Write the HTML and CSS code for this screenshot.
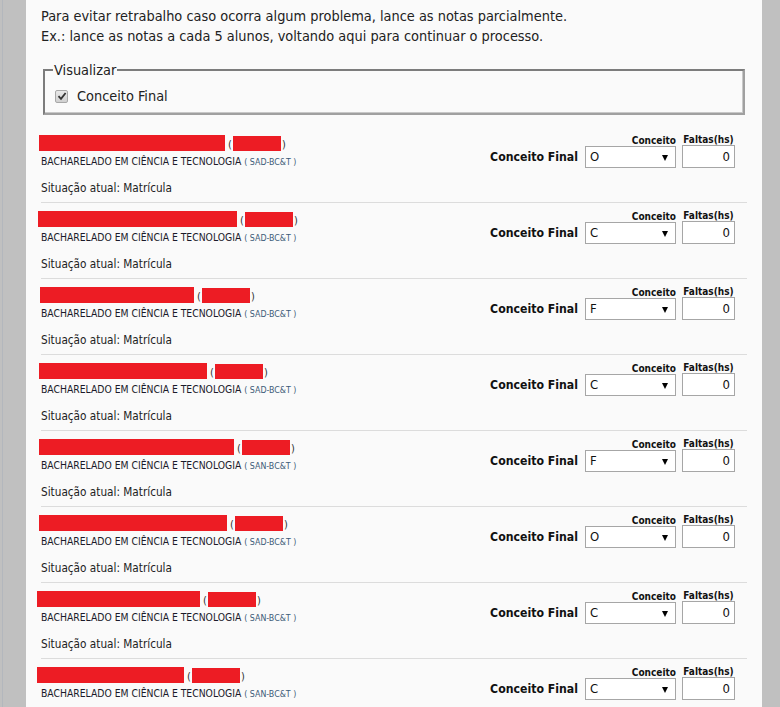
FILE: index.html
```html
<!DOCTYPE html>
<html lang="pt-BR">
<head>
<meta charset="utf-8">
<title>Lançamento de notas</title>
<link rel="stylesheet" href="styles.css">
</head>
<body>
<div class="frame">
  <div class="page">
    <p class="intro">Para evitar retrabalho caso ocorra algum problema, lance as notas parcialmente.<br>Ex.: lance as notas a cada 5 alunos, voltando aqui para continuar o processo.</p>

    <fieldset class="view">
      <legend>Visualizar</legend>
      <label class="check"><span class="box"><svg width="10" height="10" viewBox="0 0 10 10"><path d="M1.5 5.2 L4 7.8 L8.6 2" fill="none" stroke="#333" stroke-width="1.8"/></svg></span>Conceito Final</label>
    </fieldset>

    <div class="list">
      <div class="row">
        <div class="who">
          <div class="name"><span class="red" style="width:186px"></span> <span class="par">(<span class="red id" style="width:48px"></span>)</span></div>
          <div class="course">BACHARELADO EM CIÊNCIA E TECNOLOGIA <span class="code">( SAD-BC&amp;T )</span></div>
          <div class="sit">Situação atual: Matrícula</div>
        </div>
        <div class="grade">
          <span class="lbl">Conceito Final</span>
          <div class="col c1"><span class="hd">Conceito</span><span class="sel">O</span></div>
          <div class="col c2"><span class="hd">Faltas(hs)</span><span class="inp">0</span></div>
        </div>
      </div>
      <div class="row">
        <div class="who">
          <div class="name"><span class="red" style="width:199px;margin-left:-1px"></span> <span class="par">(<span class="red id" style="width:48px"></span>)</span></div>
          <div class="course">BACHARELADO EM CIÊNCIA E TECNOLOGIA <span class="code">( SAD-BC&amp;T )</span></div>
          <div class="sit">Situação atual: Matrícula</div>
        </div>
        <div class="grade">
          <span class="lbl">Conceito Final</span>
          <div class="col c1"><span class="hd">Conceito</span><span class="sel">C</span></div>
          <div class="col c2"><span class="hd">Faltas(hs)</span><span class="inp">0</span></div>
        </div>
      </div>
      <div class="row">
        <div class="who">
          <div class="name"><span class="red" style="width:154px;margin-left:1px"></span> <span class="par">(<span class="red id" style="width:48px"></span>)</span></div>
          <div class="course">BACHARELADO EM CIÊNCIA E TECNOLOGIA <span class="code">( SAD-BC&amp;T )</span></div>
          <div class="sit">Situação atual: Matrícula</div>
        </div>
        <div class="grade">
          <span class="lbl">Conceito Final</span>
          <div class="col c1"><span class="hd">Conceito</span><span class="sel">F</span></div>
          <div class="col c2"><span class="hd">Faltas(hs)</span><span class="inp">0</span></div>
        </div>
      </div>
      <div class="row">
        <div class="who">
          <div class="name"><span class="red" style="width:168px"></span> <span class="par">(<span class="red id" style="width:48px"></span>)</span></div>
          <div class="course">BACHARELADO EM CIÊNCIA E TECNOLOGIA <span class="code">( SAD-BC&amp;T )</span></div>
          <div class="sit">Situação atual: Matrícula</div>
        </div>
        <div class="grade">
          <span class="lbl">Conceito Final</span>
          <div class="col c1"><span class="hd">Conceito</span><span class="sel">C</span></div>
          <div class="col c2"><span class="hd">Faltas(hs)</span><span class="inp">0</span></div>
        </div>
      </div>
      <div class="row">
        <div class="who">
          <div class="name"><span class="red" style="width:195px"></span> <span class="par">(<span class="red id" style="width:48px"></span>)</span></div>
          <div class="course">BACHARELADO EM CIÊNCIA E TECNOLOGIA <span class="code">( SAN-BC&amp;T )</span></div>
          <div class="sit">Situação atual: Matrícula</div>
        </div>
        <div class="grade">
          <span class="lbl">Conceito Final</span>
          <div class="col c1"><span class="hd">Conceito</span><span class="sel">F</span></div>
          <div class="col c2"><span class="hd">Faltas(hs)</span><span class="inp">0</span></div>
        </div>
      </div>
      <div class="row">
        <div class="who">
          <div class="name"><span class="red" style="width:188px"></span> <span class="par">(<span class="red id" style="width:48px"></span>)</span></div>
          <div class="course">BACHARELADO EM CIÊNCIA E TECNOLOGIA <span class="code">( SAD-BC&amp;T )</span></div>
          <div class="sit">Situação atual: Matrícula</div>
        </div>
        <div class="grade">
          <span class="lbl">Conceito Final</span>
          <div class="col c1"><span class="hd">Conceito</span><span class="sel">O</span></div>
          <div class="col c2"><span class="hd">Faltas(hs)</span><span class="inp">0</span></div>
        </div>
      </div>
      <div class="row">
        <div class="who">
          <div class="name"><span class="red" style="width:163px;margin-left:-2px"></span> <span class="par">(<span class="red id" style="width:48px"></span>)</span></div>
          <div class="course">BACHARELADO EM CIÊNCIA E TECNOLOGIA <span class="code">( SAN-BC&amp;T )</span></div>
          <div class="sit">Situação atual: Matrícula</div>
        </div>
        <div class="grade">
          <span class="lbl">Conceito Final</span>
          <div class="col c1"><span class="hd">Conceito</span><span class="sel">C</span></div>
          <div class="col c2"><span class="hd">Faltas(hs)</span><span class="inp">0</span></div>
        </div>
      </div>
      <div class="row">
        <div class="who">
          <div class="name"><span class="red" style="width:147px;margin-left:-2px"></span> <span class="par">(<span class="red id" style="width:48px"></span>)</span></div>
          <div class="course">BACHARELADO EM CIÊNCIA E TECNOLOGIA <span class="code">( SAN-BC&amp;T )</span></div>
        </div>
        <div class="grade">
          <span class="lbl">Conceito Final</span>
          <div class="col c1"><span class="hd">Conceito</span><span class="sel">C</span></div>
          <div class="col c2"><span class="hd">Faltas(hs)</span><span class="inp">0</span></div>
        </div>
      </div>
    </div>
  </div>
</div>
</body>
</html>
```
FILE: styles.css
```css
html, body {
  margin: 0;
  padding: 0;
  height: 100%;
  overflow: hidden;
}
body {
  background: #c0c0c0;
  font-family: "DejaVu Sans Condensed", "DejaVu Sans", sans-serif;
  color: #222;
}
.frame {
  padding-left: 26px;
  box-shadow: inset 2px 0 0 #c0c0c0, inset 3px 0 0 #b3b7bd;
  height: 100%;
}
.page {
  width: 706px;
  min-height: 100%;
  background: #fafafa;
  padding: 0 15px;
}
.intro {
  margin: 0;
  padding-top: 6px;
  font-size: 14.4px;
  line-height: 20px;
  color: #222;
}
.view {
  margin: 17px 2px 0 2px;
  padding: 0 10px 6px 10px;
  border-color: #7c7c7c #a0a0a0 #a0a0a0 #7c7c7c;
  border-width: 2px;
  border-style: solid;
  box-shadow: inset -1px -1px 0 #c8c8c8;
  height: 42px;
}
.view legend {
  font-size: 14.4px;
  padding: 0 1px;
  margin-left: -2px;
  line-height: 14px;
}
.check {
  display: flex;
  align-items: center;
  gap: 9px;
  font-size: 14.4px;
  margin-top: 11px;
}
.box {
  width: 11px;
  height: 11px;
  border: 1px solid #a8a8a8;
  border-radius: 2px;
  background: linear-gradient(#e8e8e8, #d0d0d0);
  display: flex;
  align-items: center;
  justify-content: center;
}
.list {
  margin-top: 12px;
}
.row {
  display: grid;
  grid-template-columns: 1fr auto;
  height: 75px;
  border-bottom: 1px solid #dcdcdc;
}
.who {
  padding-top: 8px;
}
.name {
  height: 16px;
  display: flex;
  align-items: flex-end;
  margin-left: -2px;
  font-size: 11px;
  color: #333;
  white-space: nowrap;
}
.red {
  display: inline-block;
  height: 16px;
  background: #ed1c24;
  vertical-align: bottom;
}
.par {
  margin-left: 3px;
  display: inline-flex;
  align-items: flex-end;
  line-height: 12px;
}
.red.id {
  height: 15px;
  margin: 0 1px;
}
.course {
  height: 20px;
  line-height: 20px;
  font-size: 10.3px;
  color: #1a1a2a;
  white-space: nowrap;
}
.code {
  font-size: 8.8px;
  color: #3c5a78;
}
.sit {
  margin-top: 10px;
  font-size: 11.7px;
  line-height: 14px;
  color: #222;
}
.grade {
  display: flex;
  align-items: flex-end;
  padding: 7px 12px 0 0;
  height: 34px;
  gap: 6px;
}
.lbl {
  font-weight: bold;
  font-size: 12.2px;
  line-height: 22px;
  margin-right: 1px;
  color: #111;
}
.col {
  display: flex;
  flex-direction: column;
}
.c1 {
  align-items: flex-end;
}
.c2 {
  align-items: center;
}
.hd {
  font-weight: bold;
  font-size: 10px;
  line-height: 11px;
  color: #111;
}
.sel {
  position: relative;
  box-sizing: border-box;
  width: 91px;
  height: 22px;
  border: 1px solid #a6a6a6;
  background: #fff;
  font-size: 13px;
  line-height: 20px;
  padding-left: 4px;
  color: #111;
}
.sel::after {
  content: "";
  position: absolute;
  right: 7px;
  top: 8px;
  border-left: 3.5px solid transparent;
  border-right: 3.5px solid transparent;
  border-top: 6px solid #000;
}
.inp {
  box-sizing: border-box;
  width: 53px;
  height: 23px;
  border: 1px solid #a6a6a6;
  background: #fff;
  font-size: 13px;
  line-height: 21px;
  text-align: right;
  padding-right: 4px;
  color: #111;
}
```
